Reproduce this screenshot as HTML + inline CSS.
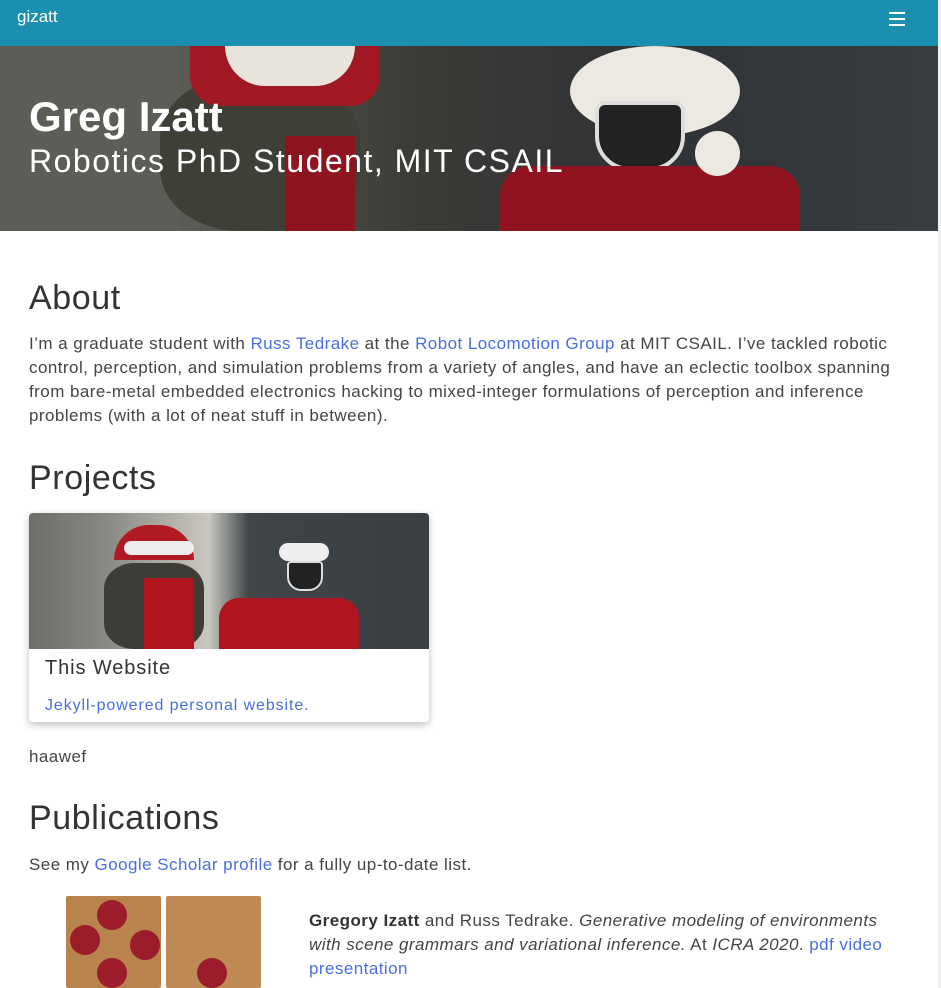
<!DOCTYPE html>
<html><head><meta charset="utf-8"><style>
*{margin:0;padding:0;box-sizing:border-box}
body{width:941px;height:988px;overflow:hidden;background:#fff;font-family:"Liberation Sans",sans-serif;color:#444;position:relative}
a{color:#4a6ee0;text-decoration:none}
.nav{position:absolute;left:0;top:0;width:938px;height:46px;background:#1a8fb0}
.nav .brand{position:absolute;left:17px;top:7px;color:#fff;font-size:17px}
.burger{position:absolute;left:889px;top:12px;width:16px}
.burger i{display:block;height:1.5px;background:#fff;margin-bottom:4.5px}
.hero{position:absolute;left:0;top:46px;width:938px;height:185px;overflow:hidden;background:linear-gradient(90deg,#4a4a47 0%,#5b5a55 20%,#3b3a36 45%,#2f3236 70%,#3a3d40 100%)}
.hero div{position:absolute}
.sidebar{position:absolute;left:938px;top:0;width:3px;height:988px;background:#f1f1f1}
.hero h1{position:absolute;left:29px;top:47px;color:#fff;font-size:42px;font-weight:bold;letter-spacing:0px}
.hero h2{position:absolute;left:29px;top:97px;color:#fff;font-size:32px;font-weight:normal;letter-spacing:1.5px}
h3{position:absolute;left:29px;font-size:34px;font-weight:normal;color:#333;letter-spacing:0.6px}
p.t{position:absolute;left:29px;font-size:17px;line-height:24px;white-space:nowrap;letter-spacing:0.45px}
.card{position:absolute;left:29px;top:513px;width:400px;height:209px;border-radius:4px;box-shadow:0 3px 8px rgba(0,0,0,.25);overflow:hidden;background:#fff}
.cimg{position:absolute;left:0;top:0;width:400px;height:136px;background:linear-gradient(90deg,#6d6d69 0%,#8a8a84 20%,#c9c7c0 45%,#3e4447 55%,#3a3f44 100%);overflow:hidden}
.cimg div{position:absolute}
</style></head><body>
<div class="nav"><span class="brand">gizatt</span><div class="burger"><i></i><i></i><i></i></div></div>
<div class="hero">
 <div style="left:0;top:0;width:180px;height:185px;background:#5d5c57"></div>
 <div style="left:160px;top:30px;width:200px;height:155px;background:#3f3f37;border-radius:40%"></div>
 <div style="left:190px;top:0;width:190px;height:60px;background:#a01822;border-radius:0 0 30px 30px"></div>
 <div style="left:225px;top:0;width:130px;height:40px;background:#e8e4dc;border-radius:0 0 40px 40px"></div>
 <div style="left:285px;top:90px;width:70px;height:95px;background:#8e1520"></div>
 <div style="left:570px;top:0;width:170px;height:90px;background:#ece9e2;border-radius:50%"></div>
 <div style="left:595px;top:55px;width:90px;height:70px;background:#222;border-radius:10px 10px 35px 35px;border:4px solid #ddd"></div>
 <div style="left:500px;top:120px;width:300px;height:65px;background:#8f1420;border-radius:30px 30px 0 0"></div>
 <div style="left:695px;top:85px;width:45px;height:45px;background:#ece9e2;border-radius:50%"></div>
 <h1>Greg Izatt</h1>
 <h2>Robotics PhD Student, MIT CSAIL</h2>
</div>
<div class="sidebar"></div>
<h3 style="top:279px">About</h3>
<p class="t" style="top:332px">I’m a graduate student with <a>Russ Tedrake</a> at the <a>Robot Locomotion Group</a> at MIT CSAIL. I’ve tackled robotic<br>control, perception, and simulation problems from a variety of angles, and have an eclectic toolbox spanning<br>from bare-metal embedded electronics hacking to mixed-integer formulations of perception and inference<br>problems (with a lot of neat stuff in between).</p>
<h3 style="top:459px">Projects</h3>
<div class="card">
 <div class="cimg">
  <div style="left:75px;top:50px;width:100px;height:86px;background:#3d3c36;border-radius:30%"></div>
  <div style="left:85px;top:12px;width:80px;height:35px;background:#b01a22;border-radius:40px 40px 0 0"></div>
  <div style="left:95px;top:28px;width:70px;height:14px;background:#eee;border-radius:8px"></div>
  <div style="left:115px;top:65px;width:50px;height:71px;background:#b0141e"></div>
  <div style="left:190px;top:85px;width:140px;height:51px;background:#b0141e;border-radius:20px 20px 0 0"></div>
  <div style="left:250px;top:30px;width:50px;height:18px;background:#eee;border-radius:9px"></div>
  <div style="left:258px;top:48px;width:36px;height:30px;background:#222;border-radius:4px 4px 14px 14px;border:2px solid #ddd"></div>
 </div>
 <div style="position:absolute;left:16px;top:144px;font-size:20px;color:#333;letter-spacing:0.9px">This Website</div>
 <a style="position:absolute;left:16px;top:184px;font-size:16px;letter-spacing:0.9px">Jekyll-powered personal website.</a>
</div>
<p class="t" style="top:745px">haawef</p>
<h3 style="top:799px">Publications</h3>
<p class="t" style="top:853px">See my <a>Google Scholar profile</a> for a fully up-to-date list.</p>
<div style="position:absolute;left:66px;top:896px;width:95px;height:92px;background:#b9834d;border-radius:2px"></div>
<div style="position:absolute;left:166px;top:896px;width:95px;height:92px;background:#c08a55;border-radius:2px"></div>
<div style="position:absolute;left:97px;top:900px;width:30px;height:30px;background:#9b1c2a;border-radius:50%"></div>
<div style="position:absolute;left:70px;top:925px;width:30px;height:30px;background:#9b1c2a;border-radius:50%"></div>
<div style="position:absolute;left:130px;top:930px;width:30px;height:30px;background:#9b1c2a;border-radius:50%"></div>
<div style="position:absolute;left:97px;top:958px;width:30px;height:30px;background:#9b1c2a;border-radius:50%"></div>
<div style="position:absolute;left:197px;top:958px;width:30px;height:30px;background:#9b1c2a;border-radius:50%"></div>
<p class="t" style="top:909px;left:309px;letter-spacing:0.45px"><b style="color:#333">Gregory Izatt</b> and Russ Tedrake. <i>Generative modeling of environments<br>with scene grammars and variational inference.</i> At <i>ICRA 2020</i>. <a>pdf</a> <a>video</a><br><a>presentation</a></p>
</body></html>
